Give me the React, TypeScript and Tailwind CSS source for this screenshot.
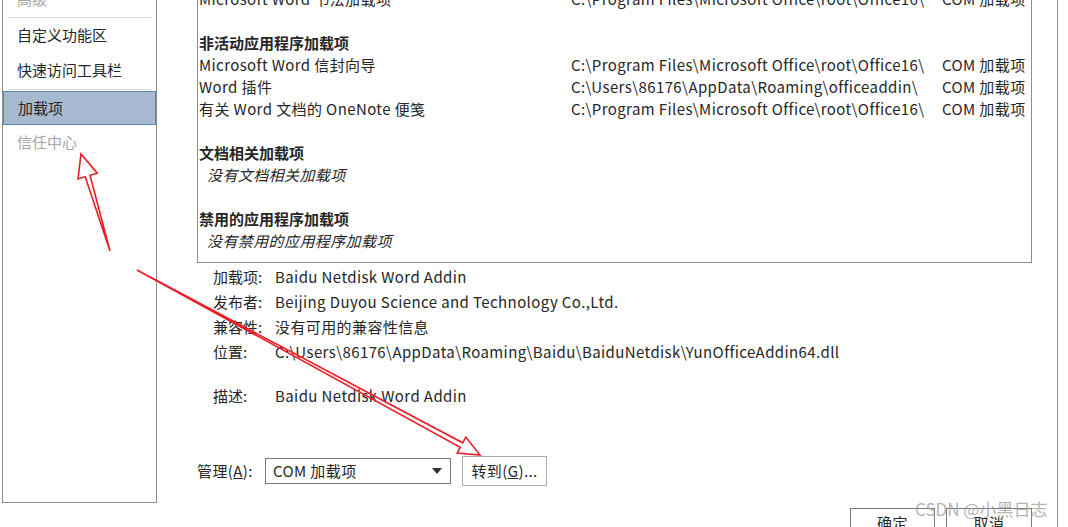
import React from "react";

const font = { fontFamily: '"Noto Sans CJK SC", sans-serif' };

type Pt = [number, number];

// hollow annotation arrow: thin shaft widening towards an open head
function arrowPoints(tail: Pt, tip: Pt, headLen: number, headHalf: number, shaftHalf: number) {
  const dx = tip[0] - tail[0];
  const dy = tip[1] - tail[1];
  const len = Math.hypot(dx, dy);
  const ux = dx / len;
  const uy = dy / len;
  const nx = -uy;
  const ny = ux;
  const bx = tip[0] - ux * headLen;
  const by = tip[1] - uy * headLen;
  const pts: Pt[] = [
    tail,
    [bx + nx * shaftHalf, by + ny * shaftHalf],
    [bx + nx * headHalf, by + ny * headHalf],
    tip,
    [bx - nx * headHalf, by - ny * headHalf],
    [bx - nx * shaftHalf, by - ny * shaftHalf],
  ];
  return pts.map((p) => p[0].toFixed(1) + "," + p[1].toFixed(1)).join(" ");
}

const activeRows = [
  { name: "Microsoft Word 书法加载项", path: "C:\\Program Files\\Microsoft Office\\root\\Office16\\", type: "COM 加载项" },
];

const inactiveRows = [
  { name: "Microsoft Word 信封向导", path: "C:\\Program Files\\Microsoft Office\\root\\Office16\\", type: "COM 加载项" },
  { name: "Word 插件", path: "C:\\Users\\86176\\AppData\\Roaming\\officeaddin\\", type: "COM 加载项" },
  { name: "有关 Word 文档的 OneNote 便笺", path: "C:\\Program Files\\Microsoft Office\\root\\Office16\\", type: "COM 加载项" },
];

function Row({ name, path, type }: { name: string; path: string; type: string }) {
  return (
    <div className="grid grid-cols-[372px_371px_1fr] h-[22px] items-center whitespace-nowrap">
      <span>{name}</span>
      <span>{path}</span>
      <span>{type}</span>
    </div>
  );
}

function Heading({ children }: { children: React.ReactNode }) {
  return <div className="h-[22px] flex items-center font-bold tracking-normal">{children}</div>;
}

function Empty({ children }: { children: React.ReactNode }) {
  return <div className="h-[22px] flex items-center pl-[8px] italic">{children}</div>;
}

function Detail({ label, value }: { label: string; value: string }) {
  return (
    <div className="flex h-[25px] items-center whitespace-nowrap">
      <span className="w-[62px] tracking-normal">{label}</span>
      <span>{value}</span>
    </div>
  );
}

export default function App() {
  const sideItem = "h-[35px] flex items-center pl-[14px]";

  return (
    <div className="relative w-[1068px] h-[527px] overflow-hidden bg-white text-[15px] tracking-[0.4px] text-[#262626]" style={font}>
      <div className="flex h-full">
        {/* left navigation */}
        <div className="ml-[2px] w-[155px] h-[503px] border border-t-0 border-[#8c8c8c] flex flex-col tracking-normal">
          <div className={sideItem + " -mt-[18px] text-[#a6a6a6]"}>高级</div>
          <div className="mx-[5px] h-px bg-[#dadada]" />
          <div className={sideItem}>自定义功能区</div>
          <div className={sideItem}>快速访问工具栏</div>
          <div className="mx-[5px] mt-[1px] h-px bg-[#dadada]" />
          <div className="mt-[1px] h-[34px] flex items-center pl-[14px] bg-[#a7b9d1] border border-[#5f82b4]">加载项</div>
          <div className={sideItem + " text-[#a6a6a6]"}>信任中心</div>
        </div>

        {/* main */}
        <div className="ml-[40px] w-[835px] flex flex-col">
          <div className="-mt-[12px] border border-t-0 border-[#8c8c8c] pl-[1px] pb-[10px]">
            {activeRows.map((r) => (
              <Row key={r.name} {...r} />
            ))}
            <div className="h-[22px]" />
            <Heading>非活动应用程序加载项</Heading>
            {inactiveRows.map((r) => (
              <Row key={r.name} {...r} />
            ))}
            <div className="h-[22px]" />
            <Heading>文档相关加载项</Heading>
            <Empty>没有文档相关加载项</Empty>
            <div className="h-[22px]" />
            <Heading>禁用的应用程序加载项</Heading>
            <Empty>没有禁用的应用程序加载项</Empty>
          </div>

          <div className="mt-[2px] pl-[16px] flex flex-col">
            <Detail label="加载项:" value="Baidu Netdisk Word Addin" />
            <Detail label="发布者:" value="Beijing Duyou Science and Technology Co.,Ltd." />
            <Detail label="兼容性:" value="没有可用的兼容性信息" />
            <Detail label="位置:" value="C:\Users\86176\AppData\Roaming\Baidu\BaiduNetdisk\YunOfficeAddin64.dll" />
            <div className="h-[19px]" />
            <Detail label="描述:" value="Baidu Netdisk Word Addin" />
          </div>

          <div className="mt-[32px] h-[2px] bg-[#e4e4e4]" />

          <div className="mt-[15px] flex items-center">
            <span className="w-[68px]">
              管理(<span className="underline">A</span>):
            </span>
            <div className="w-[186px] h-[26px] border border-[#7a7a7a] flex items-center justify-between pl-[7px] pr-[8px]">
              <span>COM 加载项</span>
              <svg width="10" height="6" viewBox="0 0 10 6">
                <path d="M0 0 L10 0 L5 6 Z" fill="#333" />
              </svg>
            </div>
            <div className="ml-[11px] w-[85px] h-[30px] border border-[#adadad] flex items-center justify-center">
              转到(<span className="underline">G</span>)...
            </div>
          </div>

          <div className="mt-[22px] flex">
            <div className="ml-[653px] w-[94px] h-[30px] border border-[#7a7a7a] flex justify-center pt-[3px]">确定</div>
            <div className="ml-[11px] w-[95px] h-[30px] border border-[#7a7a7a] flex justify-center pt-[3px]">取消</div>
          </div>
        </div>

        {/* outer edge of dialog */}
        <div className="ml-[25px] w-px h-full bg-[#8c8c8c]" />
      </div>

      {/* watermark */}
      <div className="absolute left-[915px] top-[496px] text-[17px] tracking-normal text-[#a0a0a0]/80 whitespace-nowrap">CSDN @小黑日志</div>

      {/* red annotation arrows */}
      <svg className="absolute inset-0 pointer-events-none" width="1068" height="527">
        <polygon points={arrowPoints([110, 251], [81, 154], 23, 10, 2.5)} fill="none" stroke="#ec1c24" strokeWidth="1.6" strokeLinejoin="miter" />
        <polygon points={arrowPoints([137, 270], [480, 455], 21, 9, 2.5)} fill="none" stroke="#ec1c24" strokeWidth="1.6" strokeLinejoin="miter" />
      </svg>
    </div>
  );
}
